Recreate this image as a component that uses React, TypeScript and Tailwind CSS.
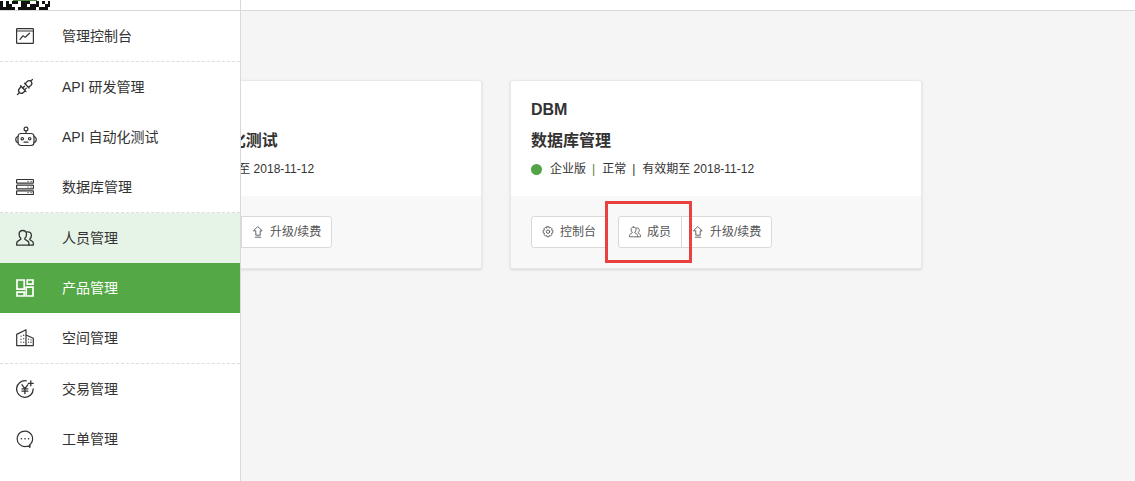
import type { ReactNode } from "react";

const iconBase = {
  fill: "none",
  stroke: "currentColor",
  strokeLinecap: "round",
  strokeLinejoin: "round",
} as const;

type IconProps = { className?: string };

function ConsoleIcon() {
  return (
    <svg {...iconBase} width="18" height="18" viewBox="0 0 18 18" strokeWidth="1.2" aria-hidden="true">
      <rect x="0.6" y="1.6" width="16.8" height="14.8" rx="0.6" />
      <path d="M0.6 4h16.8M4 12.4l2.900-3.600 2.400 1.400 4.200-4" />
    </svg>
  );
}

function PlugIcon() {
  return (
    <svg {...iconBase} width="18" height="18" viewBox="0 0 18 18" strokeWidth="1.300" aria-hidden="true">
      <path d="M16.400 1.500l-1.600 1.600M8.600 5.200l4.400 4.800M9.200 5.900l1.900-2.300c1.200-1.300 3-1.200 4 0s.9 2.800-.2 3.900l-2.400 1.800" />
      <path d="M1.400 16.600L3 15M4.600 7.800l5.400 5.800M5.200 8.500l-1.700 2c-1.200 1.300-1.100 3-.1 4s2.700 1.100 4-.1l1.900-1.600" />
      <path d="M6.700 10l1.700-1.700M8.500 11.900l1.700-1.700" />
    </svg>
  );
}

function RobotIcon() {
  return (
    <svg {...iconBase} width="24" height="22" viewBox="-2 0 24 22" strokeWidth="1.200" aria-hidden="true">
      <circle cx="11" cy="3" r="1.900" />
      <path d="M11 5v2.500" />
      <rect x="3" y="7.500" width="16" height="12" rx="3" />
      <path d="M3 10.500c-3 .6-3 5.400 0 6M19 10.500c3 .6 3 5.400 0 6M9 16.200h4" />
      <circle cx="7.300" cy="12.700" r="1.200" />
      <circle cx="14.700" cy="12.700" r="1.200" />
    </svg>
  );
}

function DatabaseIcon() {
  return (
    <svg {...iconBase} width="18" height="18" viewBox="0 0 18 18" strokeWidth="1.200" aria-hidden="true">
      <rect x="0.6" y="1.500" width="16.800" height="3.600" rx="0.6" />
      <rect x="0.6" y="7.200" width="16.800" height="3.600" rx="0.6" />
      <rect x="0.6" y="12.900" width="16.800" height="3.600" rx="0.6" />
      <path d="M12 3.300h.1M15 3.300h.1M12 9h.1M15 9h.1M12 14.700h.1M15 14.700h.1" />
    </svg>
  );
}

function PeopleIcon({ className = "size-[18px]" }: IconProps) {
  return (
    <svg {...iconBase} className={className} viewBox="0 0 18 18" strokeWidth="1.300" aria-hidden="true">
      <path d="M6.800 1.500c2.300 0 3.700 1.600 3.700 3.900 0 1.700-.7 3-1.700 3.900v1l3 1.800c.8.5 1.100 1.100 1.100 2.100v2H.7v-2c0-1 .4-1.600 1.200-2.100l2.900-1.800v-1C3.800 8.400 3.100 7.100 3.100 5.400c0-2.300 1.400-3.900 3.700-3.900z" />
      <path d="M10.900 2.900c2.800-.4 4.500 1 4.500 3.500 0 1.400-.6 2.600-1.500 3.400v1l2.300 1.500c.8.5 1.100 1 1.100 1.900v2h-4.400" />
    </svg>
  );
}

function ProductIcon() {
  return (
    <svg {...iconBase} width="18" height="18" viewBox="0 0 18 18" strokeWidth="1.700" strokeLinejoin="miter" aria-hidden="true">
      <path d="M1 1h7.200v9.200H1zM1 13.200h7.200V17H1zM11.200 1H17v4.200h-5.800zM10.200 8.200H17V17h-6.800z" />
    </svg>
  );
}

function BuildingIcon() {
  return (
    <svg {...iconBase} width="18" height="18" viewBox="0 0 18 18" strokeWidth="1.200" aria-hidden="true">
      <path d="M.7 16.600V5.400L10 .8v15.800M10 6l7.300 3.200v7.400H.7" />
      <path d="M5 7v.2M5 10v.2M5 13v.2M7.700 6.200v.2M7.700 9.500v.2M7.700 13v.2M12.500 10v.2M12.500 13v.2M15 10.800v.2M15 13.200v.2" />
    </svg>
  );
}

function TradeIcon() {
  return (
    <svg {...iconBase} width="18" height="18" viewBox="0 0 18 18" strokeWidth="1.300" aria-hidden="true">
      <path d="M10.200.8A8.300 8.300 0 1 0 17.200 9M14.800.8v5M12.300 3.300h5" />
      <path d="M6 4.800l2.900 3.900 2.900-3.900M8.900 8.700v5M6 8.900h5.800M6 11.200h5.800" />
    </svg>
  );
}

function ChatIcon() {
  return (
    <svg {...iconBase} width="18" height="18" viewBox="0 0 18 18" strokeWidth="1.200" aria-hidden="true">
      <path d="M13.200 15.200a7.700 7.700 0 1 0-3 1.200h2.900l.7 1 .3-2.400" />
      <path d="M5.300 8.800h.2M8.900 8.800h.2M12.500 8.800h.2" strokeWidth="1.400" />
    </svg>
  );
}

function GearIcon() {
  return (
    <svg {...iconBase} className="size-3" viewBox="0 0 12 12" strokeWidth="0.900" aria-hidden="true">
      <path d="M5 .7h2l.4 1.300 1.300-.6 1.400 1.400-.6 1.300 1.400.5v2.100l-1.400.5.6 1.300-1.400 1.400-1.300-.6-.4 1.500H5l-.4-1.500-1.300.6-1.400-1.400.6-1.300-1.400-.5V4.600l1.400-.5-.6-1.300 1.400-1.400 1.300.6z" />
      <circle cx="6" cy="5.700" r="1.700" />
    </svg>
  );
}

function UpgradeIcon() {
  return (
    <svg {...iconBase} className="size-3" viewBox="0 0 12 12" strokeWidth="0.900" aria-hidden="true">
      <path d="M6 .8l4.200 4H8.200v4.400H3.800V4.800h-2zM3.300 11.200h5.400" />
    </svg>
  );
}

// Lower rows of the account QR code, 3px modules
const qrRows = [
  "10101101110010101",
  "10110001101110011",
  "11111011111101110",
];

function QrCode() {
  return (
    <svg width="50" height="10" viewBox="0 0 50 10" shapeRendering="crispEdges" aria-hidden="true">
      <path d="M0 0h50v10H0z" fill="#fff" />
      {qrRows.map((row, y) =>
        row.split("").map((cell, x) =>
          cell === "1" ? <rect key={`${x}-${y}`} x={x * 3} y={1 + y * 3} width="3" height="3" fill="#111" /> : null
        )
      )}
      <path d="M13 0h24v1H13z" fill="#4d8a3c" />
    </svg>
  );
}

type MenuItem = {
  name: string;
  icon: ReactNode;
  className?: string;
};

const menuGroups: MenuItem[][] = [
  [{ name: "管理控制台", icon: <ConsoleIcon /> }],
  [
    { name: "API 研发管理", icon: <PlugIcon /> },
    { name: "API 自动化测试", icon: <RobotIcon /> },
    { name: "数据库管理", icon: <DatabaseIcon /> },
  ],
  [
    { name: "人员管理", icon: <PeopleIcon />, className: "bg-[#e6f4e7]" },
    { name: "产品管理", icon: <ProductIcon />, className: "bg-[#55a846] text-white" },
    { name: "空间管理", icon: <BuildingIcon /> },
  ],
  [
    { name: "交易管理", icon: <TradeIcon /> },
    { name: "工单管理", icon: <ChatIcon /> },
  ],
];

function Sidebar() {
  return (
    <nav className="w-[241px] shrink-0 border-r border-[#d9d9d9] bg-white">
      {menuGroups.map((group, i) => (
        <ul key={i} className="border-b border-dashed border-[#ddd] last:border-b-0">
          {group.map((item) => (
            <li key={item.name}>
              <a href="#" className={`flex h-[50px] items-center text-sm ${item.className ?? ""}`}>
                <span className="ml-3 flex w-[26px] justify-center">{item.icon}</span>
                <span className="ml-6">{item.name}</span>
              </a>
            </li>
          ))}
        </ul>
      ))}
    </nav>
  );
}

const buttonClass = "flex h-8 items-center gap-1.5 border border-[#d9d9d9] bg-white px-2.5 text-[#555]";

function ProductCard({ code, name, highlight }: { code: string; name: string; highlight?: boolean }) {
  return (
    <section className="overflow-hidden rounded-[3px] border border-[#e8e8e8] bg-white shadow-sm">
      <div className="px-5 py-[17px]">
        <h2 className="text-base leading-6 font-bold">{code}</h2>
        <h3 className="mt-[7px] text-base leading-6 font-bold">{name}</h3>
        <p className="mt-1.5 flex items-center text-xs leading-5">
          <span className="mr-2 size-[11px] rounded-full bg-[#52a447]" />
          企业版
          <span className="mr-[7px] ml-1.5 text-[#55803a]">|</span>
          正常
          <span className="mr-[7px] ml-1.5">|</span>
          有效期至 2018-11-12
        </p>
      </div>
      <div className="flex bg-[#f8f8f8] p-5 text-xs">
        <button type="button" className={`${buttonClass} rounded-l-[3px]`}>
          <GearIcon />
          控制台
        </button>
        <div className="relative ml-[11px] flex">
          <button type="button" className={`${buttonClass} rounded-l-[3px]`}>
            <PeopleIcon className="size-3" />
            成员
          </button>
          <button type="button" className={`${buttonClass} -ml-px rounded-r-[3px]`}>
            <UpgradeIcon />
            升级/续费
          </button>
          {highlight && (
            <span className="pointer-events-none absolute -top-[15px] -left-[13px] h-[62px] w-[87px] border-3 border-[#e94040]" />
          )}
        </div>
      </div>
    </section>
  );
}

export default function App() {
  return (
    <div className="flex h-screen flex-col overflow-hidden bg-[#f5f5f5] font-['Liberation_Sans','Noto_Sans_CJK_SC',sans-serif] text-[#333]">
      <header className="flex border-b border-[#d9d9d9] bg-white">
        <div className="w-[241px] border-r border-[#d9d9d9]">
          <QrCode />
        </div>
      </header>
      <div className="flex flex-1">
        <Sidebar />
        {/* The open menu covers the left part of the card list */}
        <main className="min-w-0 flex-1 overflow-hidden">
          <div className="-ml-[171px] grid grid-cols-[repeat(auto-fill,412px)] gap-7 py-[69px] pr-5">
            <ProductCard code="AMS" name="API研发管理与自动化测试" />
            <ProductCard code="DBM" name="数据库管理" highlight />
          </div>
        </main>
      </div>
    </div>
  );
}
